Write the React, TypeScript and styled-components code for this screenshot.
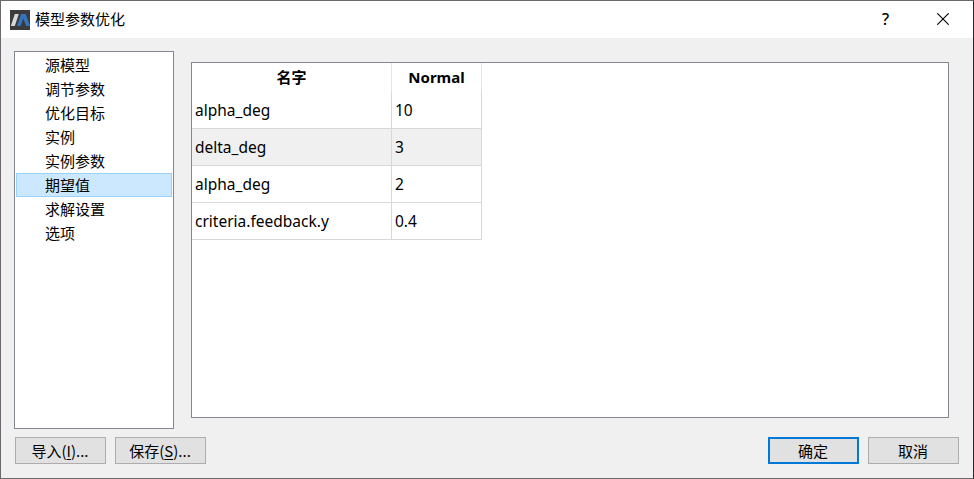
import React from "react";
import styled, { createGlobalStyle } from "styled-components";

const GlobalStyle = createGlobalStyle`
  * { box-sizing: border-box; }
  body {
    margin: 0;
    font-family: "Noto Sans", "Noto Sans CJK SC", sans-serif;
    font-size: 15px;
    color: #000;
  }
`;

const Dialog = styled.div`
  width: 974px;
  height: 479px;
  display: flex;
  flex-direction: column;
  background: #f0f0f0;
  border: 1px solid #6b696b;
  border-right-color: #2c2529;
  overflow: hidden;
`;

const TitleBar = styled.header`
  flex: none;
  height: 37px;
  display: flex;
  align-items: center;
  padding: 0 2px 0 9px;
  background: #fff;
`;

const Title = styled.h1`
  flex: 1;
  margin: 0 0 1px 5px;
  font: 400 15px/20px "Noto Sans CJK SC", sans-serif;
`;

const CaptionButton = styled.button`
  width: 57px;
  height: 37px;
  padding: 0 0 2px;
  border: 0;
  background: transparent;
  display: flex;
  align-items: center;
  justify-content: center;
  font: 500 16px/20px "Noto Sans", sans-serif;
  color: #000;
`;

const Body = styled.main`
  flex: none;
  height: 378px;
  margin-top: 13px;
  padding: 0 24px 0 13px;
  display: flex;
  gap: 17px;
`;

const NavList = styled.ul`
  width: 160px;
  margin: 0;
  padding: 1px;
  list-style: none;
  background: #fff;
  border: 1px solid #828790;
`;

const NavItem = styled.li<{ $selected: boolean }>`
  height: 24px;
  padding-left: 28px;
  border: 1px solid ${(p) => (p.$selected ? "#99d1ff" : "transparent")};
  background: ${(p) => (p.$selected ? "#cce8ff" : "transparent")};
  font: 400 15px/22px "Noto Sans CJK SC", sans-serif;
`;

const Panel = styled.section`
  flex: 1;
  height: 356px;
  margin-top: 11px;
  background: #fff;
  border: 1px solid #828790;
`;

const Table = styled.div`
  width: 290px;
`;

const Row = styled.div<{ $alternate?: boolean }>`
  display: grid;
  grid-template-columns: 200px 90px;
  height: 37px;
  background: ${(p) => (p.$alternate ? "#f0f0f0" : "#fff")};
`;

const HeaderRow = styled(Row)`
  height: 29px;
`;

const HeaderCell = styled.div`
  border-right: 1px solid #e5e5e5;
  text-align: center;
  font-weight: 700;
  font-size: 15px;
  line-height: 29px;
`;

const Cell = styled.div`
  height: 37px;
  padding-left: 3px;
  border-right: 1px solid #d8d8d8;
  border-bottom: 1px solid #d8d8d8;
  font-size: 15.5px;
  line-height: 36px;
  white-space: nowrap;
`;

const Footer = styled.footer`
  display: flex;
  gap: 9px;
  margin-top: 8px;
  padding: 0 14px;
`;

const Spacer = styled.div`
  flex: 1;
`;

const PushButton = styled.button<{ $primary?: boolean }>`
  width: 91px;
  height: 27px;
  padding: 0 1px 0 0;
  background: #e1e1e1;
  border: ${(p) => (p.$primary ? "2px solid #0078d7" : "1px solid #adadad")};
  color: #000;
  font: 400 15px/20px "Noto Sans CJK SC", sans-serif;
`;

const Mnemonic = styled.span`
  text-decoration: underline;
  text-decoration-thickness: 1px;
  text-underline-offset: 2px;
`;

const pages = ["源模型", "调节参数", "优化目标", "实例", "实例参数", "期望值", "求解设置", "选项"];
const rows = [
  ["alpha_deg", "10"],
  ["delta_deg", "3"],
  ["alpha_deg", "2"],
  ["criteria.feedback.y", "0.4"],
];

const AppIcon = () => (
  <svg width="20" height="20" viewBox="0 0 20 20">
    <rect width="20" height="20" fill="#3b3b3d" />
    <path d="M.8 16 4.8 4H8.8L4.8 16Z" fill="#d5d8d8" />
    <path d="M7 16 11 4H15.8L20 16H16.3L13.2 8.5 10.6 16Z" fill="#3474bd" />
  </svg>
);

const CloseIcon = () => (
  <svg width="12" height="12" viewBox="0 0 12 12">
    <path d="M.3.3 11.7 11.7M11.7.3.3 11.7" stroke="#000" strokeWidth="1.1" />
  </svg>
);

export default function App() {
  return (
    <>
      <GlobalStyle />
      <Dialog>
        <TitleBar>
          <AppIcon />
          <Title>模型参数优化</Title>
          <CaptionButton>?</CaptionButton>
          <CaptionButton>
            <CloseIcon />
          </CaptionButton>
        </TitleBar>
        <Body>
          <NavList>
            {pages.map((p) => (
              <NavItem key={p} $selected={p === "期望值"}>{p}</NavItem>
            ))}
          </NavList>
          <Panel>
            <Table>
              <HeaderRow>
                <HeaderCell>名字</HeaderCell>
                <HeaderCell>Normal</HeaderCell>
              </HeaderRow>
              {rows.map(([name, value], i) => (
                <Row key={i} $alternate={i === 1}>
                  <Cell>{name}</Cell>
                  <Cell>{value}</Cell>
                </Row>
              ))}
            </Table>
          </Panel>
        </Body>
        <Footer>
          <PushButton>导入(<Mnemonic>I</Mnemonic>)...</PushButton>
          <PushButton>保存(<Mnemonic>S</Mnemonic>)...</PushButton>
          <Spacer />
          <PushButton $primary>确定</PushButton>
          <PushButton>取消</PushButton>
        </Footer>
      </Dialog>
    </>
  );
}
